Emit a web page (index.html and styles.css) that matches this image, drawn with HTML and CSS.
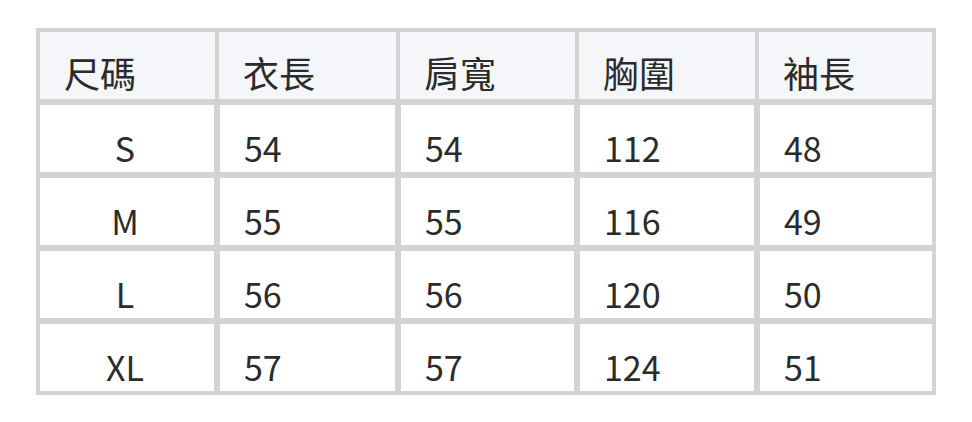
FILE: index.html
```html
<!DOCTYPE html>
<html lang="zh-Hant">
<head>
<meta charset="utf-8">
<link rel="stylesheet" href="styles.css">
</head>
<body>
<div class="sheet">
  <div class="row head">
    <div class="cell">尺碼</div>
    <div class="cell">衣長</div>
    <div class="cell">肩寬</div>
    <div class="cell">胸圍</div>
    <div class="cell">袖長</div>
  </div>
  <div class="row">
    <div class="cell size">S</div>
    <div class="cell">54</div>
    <div class="cell">54</div>
    <div class="cell">112</div>
    <div class="cell">48</div>
  </div>
  <div class="row">
    <div class="cell size">M</div>
    <div class="cell">55</div>
    <div class="cell">55</div>
    <div class="cell">116</div>
    <div class="cell">49</div>
  </div>
  <div class="row">
    <div class="cell size">L</div>
    <div class="cell">56</div>
    <div class="cell">56</div>
    <div class="cell">120</div>
    <div class="cell">50</div>
  </div>
  <div class="row">
    <div class="cell size">XL</div>
    <div class="cell">57</div>
    <div class="cell">57</div>
    <div class="cell">124</div>
    <div class="cell">51</div>
  </div>
</div>
</body>
</html>
```
FILE: styles.css
```css
html, body {
  margin: 0;
  padding: 0;
  background: #ffffff;
}
body {
  font-family: "Noto Sans CJK TC", "Noto Sans", sans-serif;
  color: #2b2b2b;
}
.sheet {
  margin: 28px 0 0 36px;
  width: 900px;
  box-sizing: border-box;
  padding: 4px;
  background: #d3d3d3;
  display: grid;
  row-gap: 6px;
}
.row {
  display: grid;
  grid-template-columns: 175px 177px 175px 176px 173px;
  column-gap: 4px;
  height: 67px;
}
.cell {
  background: #ffffff;
  font-size: 34px;
  line-height: 49px;
  display: flex;
  align-items: flex-end;
  border-left: 1px solid #d3d3d3;
  border-right: 1px solid #d3d3d3;
  padding: 0 0 0 24px;
  white-space: nowrap;
}
.row .cell:first-child {
  border-left: 0;
  padding-left: 24px;
}
.row .cell:last-child {
  border-right: 0;
}
.row.head .cell {
  background: #f5f6fa;
  border: 0;
  font-size: 36px;
  line-height: 50px;
  padding: 0 0 2px 24px;
}
.row .cell.size {
  justify-content: center;
  padding: 0 4px 0 0;
}
```
